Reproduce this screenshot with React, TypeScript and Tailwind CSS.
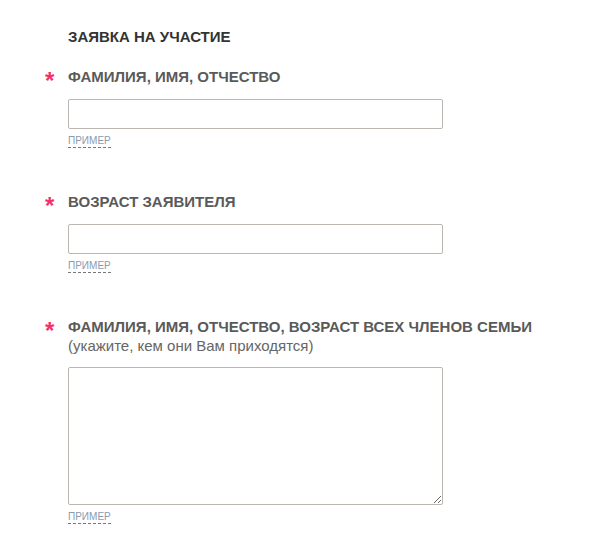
import React from "react";

const fields = [
  { label: "ФАМИЛИЯ, ИМЯ, ОТЧЕСТВО", kind: "input" },
  { label: "ВОЗРАСТ ЗАЯВИТЕЛЯ", kind: "input" },
  {
    label: "ФАМИЛИЯ, ИМЯ, ОТЧЕСТВО, ВОЗРАСТ ВСЕХ ЧЛЕНОВ СЕМЬИ",
    hint: "(укажите, кем они Вам приходятся)",
    kind: "textarea",
  },
];

function Field({ label, hint, kind }: { label: string; hint?: string; kind: string }) {
  return (
    <div className="flex">
      <div className="w-[23px] shrink-0 text-[24px] leading-[20px] text-[#f4306b] font-bold pt-[4px]">*</div>
      <div className="flex flex-col items-start">
        <div className="text-[15px] leading-[19px] font-bold text-[#5a5a5a]">{label}</div>
        {hint && <div className="text-[15px] leading-[19px] text-[#666]">{hint}</div>}
        {kind === "input" ? (
          <input
            type="text"
            className="mt-[13px] w-[375px] h-[30px] border border-[#bcb6b0] rounded-[2px] bg-white outline-none block"
          />
        ) : (
          <textarea className="mt-[12px] w-[375px] h-[138px] border border-[#bcb6b0] rounded-[2px] bg-white outline-none block" />
        )}
        <span className="mt-[6px] block text-[10px] leading-[12px] text-[#8a9ab0] border-b border-dashed border-[#777]">
          ПРИМЕР
        </span>
      </div>
    </div>
  );
}

export default function App() {
  return (
    <div className="w-[598px] h-[552px] bg-white pl-[45px] pt-[28px] font-['Liberation_Sans',Arial,sans-serif]">
      <div className="pl-[23px] text-[15px] leading-[18px] font-bold text-[#333]">ЗАЯВКА НА УЧАСТИЕ</div>
      <div className="mt-[21px] flex flex-col gap-[44px]">
        {fields.map((f, i) => (
          <Field key={i} {...f} />
        ))}
      </div>
    </div>
  );
}
